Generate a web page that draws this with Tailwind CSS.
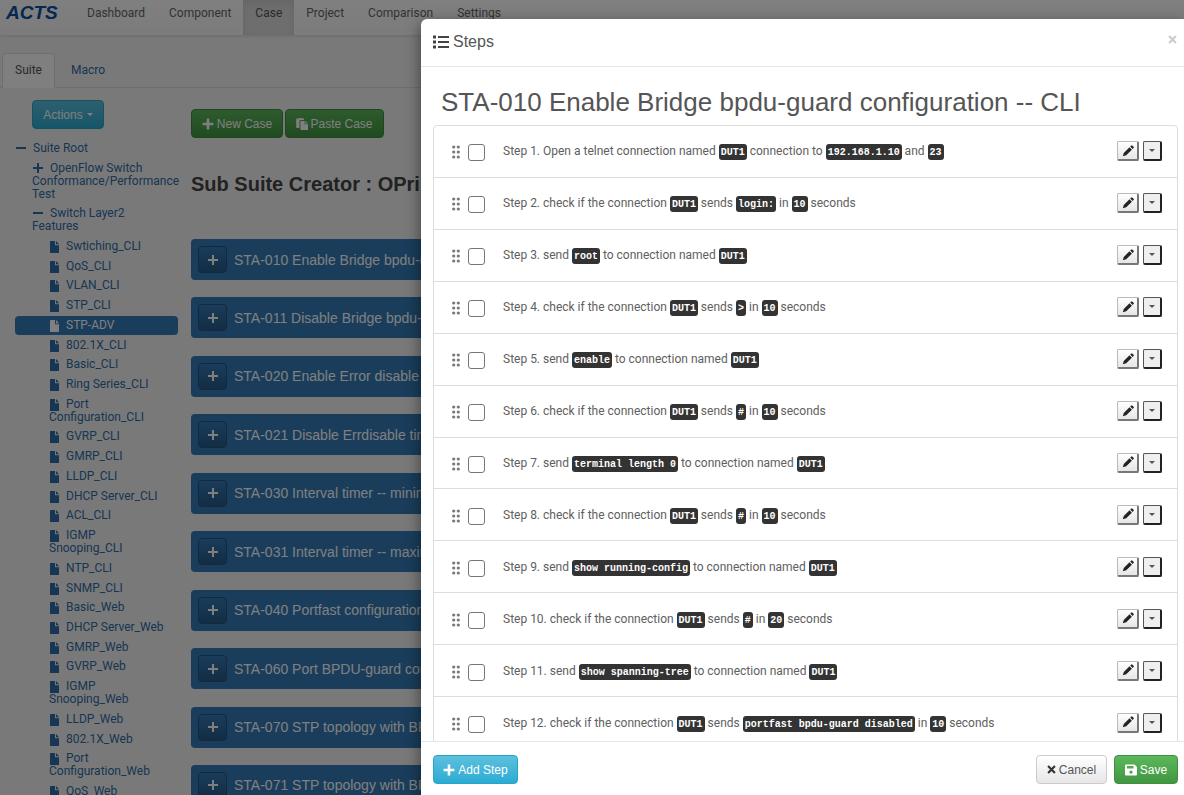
<!DOCTYPE html>
<html lang="en">
<head>
<meta charset="utf-8">
<meta name="viewport" content="width=device-width, initial-scale=1">
<title>ACTS - Case</title>
<script src="https://cdn.jsdelivr.net/npm/@tailwindcss/browser@4"></script>
</head>
<body class="relative h-screen overflow-hidden bg-[#f3f3f3] font-['Liberation_Sans',Arial,sans-serif] text-xs text-[#555]">

<svg class="hidden" aria-hidden="true">
  <symbol id="i-plus" viewBox="0 0 12 12"><path fill="currentColor" d="M4.7.6h2.6v4.1h4.1v2.6H7.3v4.1H4.7V7.3H.6V4.7h4.1z"/></symbol>
  <symbol id="i-thin-plus" viewBox="0 0 12 12"><path fill="currentColor" d="M5 1h2v4h4v2H7v4H5V7H1V5h4z"/></symbol>
  <symbol id="i-minus" viewBox="0 0 12 12"><path fill="currentColor" d="M1 5h10v2H1z"/></symbol>
  <symbol id="i-file" viewBox="0 0 9 12"><path fill="currentColor" d="M.6 0H5v4.2h4v7.2a.6.6 0 0 1-.6.6H.6a.6.6 0 0 1-.6-.6V.6A.6.6 0 0 1 .6 0zM6 0l3 3.2H6z"/></symbol>
  <symbol id="i-paste" viewBox="0 0 12 12"><path fill="currentColor" d="M1 .5h2.2L3.8 0h2l.6.5H8V2H4.6A1.2 1.2 0 0 0 3.4 3.2V10H1a.8.8 0 0 1-.8-.8V1.300A.8.8 0 0 1 1 .5zM5 3h3.600v3.200H12v5.200a.6.6 0 0 1-.6.6H5a.6.6 0 0 1-.6-.6V3.600A.6.6 0 0 1 5 3zM9.400 3L12 5.400H9.400z"/></symbol>
  <symbol id="i-list" viewBox="0 0 16 14"><path fill="currentColor" d="M0 .5h3v3H0zM0 5.500h3v3H0zM0 10.500h3v3H0zM5 1h11v2H5zM5 6h11v2H5zM5 11h11v2H5z"/></symbol>
  <symbol id="i-grip" viewBox="0 0 8 14"><g fill="#777"><circle cx="1.700" cy="2" r="1.600"/><circle cx="6.300" cy="2" r="1.600"/><circle cx="1.700" cy="7" r="1.600"/><circle cx="6.300" cy="7" r="1.600"/><circle cx="1.700" cy="12" r="1.600"/><circle cx="6.300" cy="12" r="1.600"/></g></symbol>
  <symbol id="i-pencil" viewBox="0 0 12 12"><path fill="#222" d="M8.200 1.600l.9-.9a1 1 0 0 1 1.400 0l1 1a1 1 0 0 1 0 1.400l-.9.9zM7.500 2.300l2.400 2.400-5.700 5.600L.8 11.300l1-3.400z"/></symbol>
  <symbol id="i-caret" viewBox="0 0 8 4"><path fill="currentColor" d="M0 0h8L4 4z"/></symbol>
  <symbol id="i-x" viewBox="0 0 10 10"><path fill="none" stroke="currentColor" stroke-width="2.400" d="M1.200 1.200l7.600 7.600M8.800 1.200L1.200 8.800"/></symbol>
  <symbol id="i-save" viewBox="0 0 12 12"><path fill="currentColor" fill-rule="evenodd" d="M1 .5h8.500L12 3v7.500a1 1 0 0 1-1 1H1a1 1 0 0 1-1-1v-9a1 1 0 0 1 1-1zM2 2v2.600h6.500V2zM6 6.400a1.700 1.700 0 1 0 0 3.400 1.700 1.700 0 0 0 0-3.400z"/></symbol>
</svg>

<div>
  <header class="flex h-[35px] items-stretch bg-linear-to-b from-white to-[#f8f8f8] shadow-[0_1px_4px_rgba(0,0,0,0.12)]">
    <a href="#" class="w-[75px] pl-[6px] text-[19px] leading-[26px] font-bold text-[#0a4ea2] italic">ACTS</a>
    <nav class="flex font-[Roboto,sans-serif] leading-[27px] text-[#666]">
      <a href="#" class="px-3">Dashboard</a>
      <a href="#" class="px-3">Component</a>
      <a href="#" class="bg-[#dcdcdc] px-3 text-[#555] shadow-[inset_0_3px_9px_rgba(0,0,0,0.075)]">Case</a>
      <a href="#" class="px-3">Project</a>
      <a href="#" class="px-3">Comparison</a>
      <a href="#" class="px-3">Settings</a>
    </nav>
  </header>

  <nav class="mt-[18px] flex h-[35px] border-b border-[#ddd] pl-[2px] font-[Roboto,sans-serif] leading-[34px]">
    <a href="#" class="-mb-px rounded-t border border-b-0 border-[#ddd] bg-white px-3 leading-[33px]">Suite</a>
    <a href="#" class="px-4 text-[#2f6ca8]">Macro</a>
  </nav>

  <div class="flex">
    <aside class="w-[191px] shrink-0 pt-3 text-[#2f6ca8]">
      <button type="button" class="ml-8 flex h-[29px] w-[72px] items-center justify-center gap-1 rounded border border-[#28a4c9] bg-linear-to-b from-[#5bc0de] to-[#2aabd2] text-white">Actions <svg class="h-[3px] w-[6px]"><use href="#i-caret"/></svg></button>
      <ul class="pt-[10px] font-[Roboto,sans-serif] leading-[13px]">
        <li class="mb-[1px] py-[3px] pl-[15px]"><a href="#"><svg class="mr-[6px] inline size-3 align-[-2px]"><use href="#i-minus"/></svg>Suite Root</a></li>
        <li class="py-[3px] pl-8"><a href="#"><svg class="mr-[6px] inline size-3 align-[-2px]"><use href="#i-thin-plus"/></svg>OpenFlow Switch<br>Conformance/Performance<br>Test</a></li>
        <li class="py-[3px] pl-8"><a href="#"><svg class="mr-[6px] inline size-3 align-[-2px]"><use href="#i-minus"/></svg>Switch Layer2<br>Features</a></li>
      </ul>
      <ul id="tree" class="mt-[1px] ml-[15px] flex h-[564px] w-[163px] flex-col justify-between font-[Roboto,sans-serif] leading-[13px]"></ul>
    </aside>

    <main class="min-w-0 grow pt-[21px]">
      <div class="flex gap-[2px]">
        <button type="button" class="flex h-[29px] w-[92px] items-center justify-center gap-[3px] rounded border border-[#3e8f3e] bg-linear-to-b from-[#5cb85c] to-[#419641] text-white"><svg class="size-3"><use href="#i-plus"/></svg>New Case</button>
        <button type="button" class="flex h-[29px] w-[99px] items-center justify-center gap-[2px] rounded border border-[#3e8f3e] bg-linear-to-b from-[#5cb85c] to-[#419641] text-white"><svg class="size-3"><use href="#i-paste"/></svg>Paste Case</button>
      </div>
      <h2 class="mt-[34px] text-xl leading-6 font-bold whitespace-nowrap text-[#444]">Sub Suite Creator : OPring</h2>
      <ul id="cases" class="mt-[43px] flex h-[567px] flex-col justify-between"></ul>
    </main>
  </div>
</div>

<div class="absolute inset-0 bg-black/50"></div>

<section role="dialog" aria-labelledby="dlg" class="absolute top-[19px] right-0 bottom-0 left-[421px] flex flex-col rounded-tl-md bg-white shadow-[0_5px_15px_rgba(0,0,0,0.5)]">
  <header class="flex h-12 shrink-0 items-center justify-between border-b border-[#e5e5e5] pr-[7px] pb-[2px] pl-3">
    <h1 id="dlg" class="flex items-center gap-[4px] text-base text-[#555]"><svg class="h-[14px] w-4 text-[#444]"><use href="#i-list"/></svg>Steps</h1>
    <button type="button" aria-label="Close" class="mb-1 text-[#ccc]"><svg class="size-[9px]"><use href="#i-x"/></svg></button>
  </header>
  <div class="min-h-0 grow overflow-hidden pr-[6px] pl-3">
    <h2 class="pt-[18px] pl-[8px] text-[26px] leading-[34px] whitespace-nowrap text-[#555]">STA-010 Enable Bridge bpdu-guard configuration -- CLI</h2>
    <ol id="steps" class="mt-[6px] grid min-h-[625px] auto-rows-fr rounded border border-[#ddd]"></ol>
  </div>
  <footer class="flex shrink-0 items-start justify-between border-t border-[#e5e5e5] pt-[13px] pr-[6px] pb-[11px] pl-3">
    <button type="button" class="flex h-[29px] w-[85px] items-center justify-center gap-[3px] rounded border border-[#28a4c9] bg-linear-to-b from-[#5bc0de] to-[#2aabd2] text-white"><svg class="size-3"><use href="#i-plus"/></svg>Add Step</button>
    <div class="flex gap-[7px]">
      <button type="button" class="flex h-[29px] w-[71px] items-center justify-center gap-[3px] rounded border border-[#ccc] bg-linear-to-b from-white to-[#e6e6e6]"><svg class="size-[9px] text-[#333]"><use href="#i-x"/></svg>Cancel</button>
      <button type="button" class="flex h-[29px] w-16 items-center justify-center gap-[3px] rounded border border-[#3e8f3e] bg-linear-to-b from-[#5cb85c] to-[#419641] text-white"><svg class="size-3"><use href="#i-save"/></svg>Save</button>
    </div>
  </footer>
</section>

<script>
  const files = ['Swtiching_CLI', 'QoS_CLI', 'VLAN_CLI', 'STP_CLI', 'STP-ADV', '802.1X_CLI', 'Basic_CLI', 'Ring Series_CLI', 'Port<br>Configuration_CLI', 'GVRP_CLI', 'GMRP_CLI', 'LLDP_CLI', 'DHCP Server_CLI', 'ACL_CLI', 'IGMP<br>Snooping_CLI', 'NTP_CLI', 'SNMP_CLI', 'Basic_Web', 'DHCP Server_Web', 'GMRP_Web', 'GVRP_Web', 'IGMP<br>Snooping_Web', 'LLDP_Web', '802.1X_Web', 'Port<br>Configuration_Web', 'QoS_Web'];
  document.getElementById('tree').innerHTML = files.map(f => `
    <li class="rounded py-[3px] pl-[34px] ${f === 'STP-ADV' ? 'bg-[#337ab7] text-white' : ''}"><a href="#"><svg class="mr-[7px] ml-[1px] inline h-3 w-[9px] align-[-3px]"><use href="#i-file"/></svg>${f}</a></li>`).join('');

  const cases = ['STA-010 Enable Bridge bpdu-guard', 'STA-011 Disable Bridge bpdu-guard', 'STA-020 Enable Error disable', 'STA-021 Disable Errdisable timer', 'STA-030 Interval timer -- minimum', 'STA-031 Interval timer -- maximum', 'STA-040 Portfast configuration', 'STA-060 Port BPDU-guard config', 'STA-070 STP topology with BPDU', 'STA-071 STP topology with BPDU'];
  document.getElementById('cases').innerHTML = cases.map(c => `
    <li class="flex h-[41px] items-center gap-[7px] rounded bg-[#337ab7] pl-[7px] text-sm whitespace-nowrap text-white"><button type="button" aria-label="Expand" class="flex h-[27px] w-[29px] items-center justify-center rounded border border-[#245580] bg-linear-to-b from-[#337ab7] to-[#265a88]"><svg class="size-3"><use href="#i-thin-plus"/></svg></button>${c}</li>`).join('');

  // Text between backticks is shown as a code badge.
  const steps = ['Open a telnet connection named `DUT1` connection to `192.168.1.10` and `23`', 'check if the connection `DUT1` sends `login:` in `10` seconds', 'send `root` to connection named `DUT1`', 'check if the connection `DUT1` sends `&gt;` in `10` seconds', 'send `enable` to connection named `DUT1`', 'check if the connection `DUT1` sends `#` in `10` seconds', 'send `terminal length 0` to connection named `DUT1`', 'check if the connection `DUT1` sends `#` in `10` seconds', 'send `show running-config` to connection named `DUT1`', 'check if the connection `DUT1` sends `#` in `20` seconds', 'send `show spanning-tree` to connection named `DUT1`', 'check if the connection `DUT1` sends `portfast bpdu-guard disabled` in `10` seconds'];
  document.getElementById('steps').innerHTML = steps.map((s, i) => `
    <li class="flex items-center border-b border-[#ddd] pr-[15px] pl-[18px]">
      <svg class="mt-[2px] h-[14px] w-2"><use href="#i-grip"/></svg>
      <input type="checkbox" id="step${i + 1}" class="mt-[3px] ml-2 size-[17px] appearance-none rounded-[3px] border border-[#767676] bg-white">
      <label for="step${i + 1}" class="ml-[18px] grow font-[Roboto,sans-serif] leading-5 whitespace-nowrap text-[#606060]">Step ${i + 1}. ${s.replace(/`([^`]+)`/g, '<code class="rounded-[3px] bg-[#333] px-[2px] pt-[3px] pb-[2px] font-[\'Liberation_Mono\',monospace] text-[10px] leading-3 font-bold text-white">$1</code>')}</label>
      <button type="button" aria-label="Edit step" class="flex h-5 w-[22px] items-center justify-center rounded-[2px] border border-r-2 border-b-2 border-[#bbb] border-r-[#777] border-b-[#777] bg-linear-to-b from-white to-[#e6e6e6]"><svg class="size-3"><use href="#i-pencil"/></svg></button>
      <button type="button" aria-label="More actions" class="ml-1 flex h-5 w-[19px] items-center justify-center rounded-[2px] border border-r-2 border-b-2 border-[#555] border-r-[#222] border-b-[#222] bg-[#efefef]"><svg class="h-[3px] w-[6px] text-[#555]"><use href="#i-caret"/></svg></button>
    </li>`).join('');
</script>
</body>
</html>
